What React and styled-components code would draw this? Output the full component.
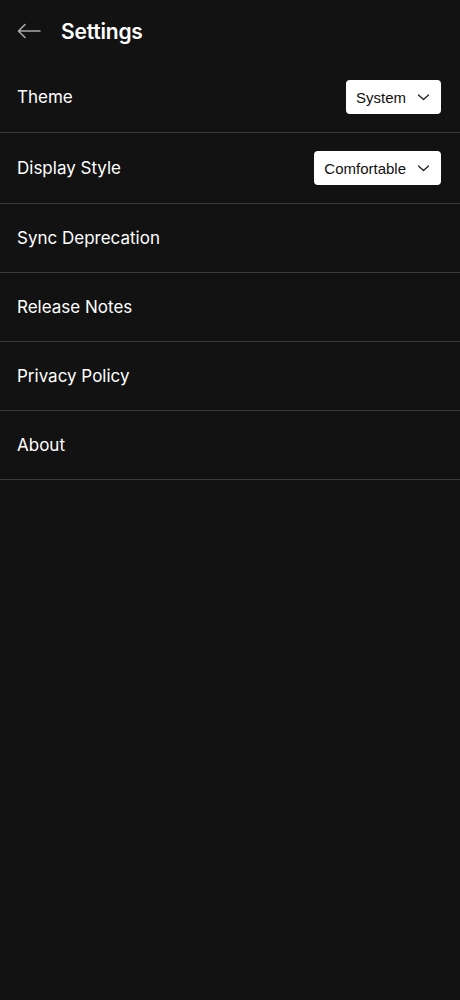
import React from 'react'
import styled, { createGlobalStyle } from 'styled-components'

const Global = createGlobalStyle`
  html, body {
    margin: 0;
    background: #121212;
  }
  body {
    font-family: 'Inter', 'Noto Sans', sans-serif;
    color: #fff;
  }
`

const Page = styled.div`
  min-height: 1000px;
  background: #121212;
  display: flex;
  flex-direction: column;
`

const Header = styled.div`
  height: 62px;
  display: flex;
  align-items: center;
  padding: 0 17px;
  gap: 20px;
  box-sizing: border-box;
`

const BackButton = styled.button`
  background: none;
  border: none;
  padding: 0;
  width: 24px;
  height: 24px;
  display: flex;
  align-items: center;
  color: #a8a8a8;
`

const Title = styled.h1`
  margin: 0;
  font-size: 21px;
  font-weight: 600;
  letter-spacing: -0.2px;
`

const Row = styled.div`
  display: flex;
  align-items: center;
  justify-content: space-between;
  padding: ${p => (p.$select ? '18px' : '24px')} 19px ${p => (p.$select ? '18px' : '24px')} 17px;
  border-bottom: 1px solid #3a3a3a;
`

const Label = styled.span`
  font-size: 17px;
  line-height: 20px;
  font-weight: 400;
`

const Select = styled.div`
  height: 34px;
  box-sizing: border-box;
  background: #fff;
  border-radius: 4px;
  display: flex;
  align-items: center;
  gap: 11px;
  padding: 0 11px 0 10px;
  color: #111;
  font-family: 'Liberation Sans', Arial, sans-serif;
  font-size: 15px;
`

const Chevron = () => (
  <svg width="13" height="12" viewBox="0 0 13 12" fill="none" stroke="#222" strokeWidth="1.3" strokeLinecap="round" strokeLinejoin="round">
    <path d="M1.5 4l5 4.5 5-4.5" />
  </svg>
)

const ArrowLeft = () => (
  <svg width="24" height="16" viewBox="0 0 24 16" fill="none" stroke="currentColor" strokeWidth="1.6" strokeLinecap="round" strokeLinejoin="round">
    <path d="M23 8H1.5M8 1.5L1.5 8L8 14.5" />
  </svg>
)

const items = ['Sync Deprecation', 'Release Notes', 'Privacy Policy', 'About']

export default function App() {
  return (
    <Page>
      <Global />
      <Header>
        <BackButton>
          <ArrowLeft />
        </BackButton>
        <Title>Settings</Title>
      </Header>
      <Row $select>
        <Label>Theme</Label>
        <Select>
          System <Chevron />
        </Select>
      </Row>
      <Row $select>
        <Label>Display Style</Label>
        <Select>
          Comfortable <Chevron />
        </Select>
      </Row>
      {items.map(item => (
        <Row key={item}>
          <Label>{item}</Label>
        </Row>
      ))}
    </Page>
  )
}
